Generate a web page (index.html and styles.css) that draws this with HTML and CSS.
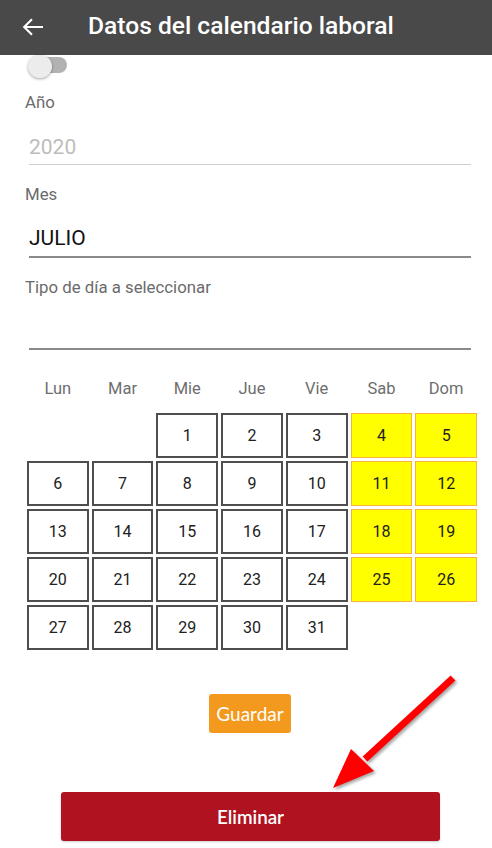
FILE: index.html
```html
<!DOCTYPE html>
<html lang="es">
<head>
<meta charset="utf-8">
<title>Datos del calendario laboral</title>
<link rel="stylesheet" href="styles.css">
</head>
<body>
<div class="page">
  <header class="topbar">
    <svg class="back" width="22" height="18" viewBox="0 0 22 18" aria-hidden="true">
      <path d="M21 9H2.5M10 1.2L2.2 9l7.8 7.8" fill="none" stroke="#fff" stroke-width="2.1"/>
    </svg>
    <h1 class="title">Datos del calendario laboral</h1>
  </header>

  <div class="toggle-row">
    <span class="toggle"><span class="track"></span><span class="thumb"></span></span>
  </div>

  <div class="label label-ano">Año</div>
  <div class="field field-disabled"><span class="value">2020</span></div>

  <div class="label label-mes">Mes</div>
  <div class="field field-dark"><span class="value value-dark">JULIO</span></div>

  <div class="label label-tipo">Tipo de día a seleccionar</div>
  <div class="field field-empty"></div>

  <div class="weekdays">
    <span>Lun</span><span>Mar</span><span>Mie</span><span>Jue</span><span>Vie</span><span>Sab</span><span>Dom</span>
  </div>

  <div class="calendar">
    <span class="blank"></span><span class="blank"></span>
    <span class="day">1</span><span class="day">2</span><span class="day">3</span><span class="day weekend">4</span><span class="day weekend">5</span>
    <span class="day">6</span><span class="day">7</span><span class="day">8</span><span class="day">9</span><span class="day">10</span><span class="day weekend">11</span><span class="day weekend">12</span>
    <span class="day">13</span><span class="day">14</span><span class="day">15</span><span class="day">16</span><span class="day">17</span><span class="day weekend">18</span><span class="day weekend">19</span>
    <span class="day">20</span><span class="day">21</span><span class="day">22</span><span class="day">23</span><span class="day">24</span><span class="day weekend">25</span><span class="day weekend">26</span>
    <span class="day">27</span><span class="day">28</span><span class="day">29</span><span class="day">30</span><span class="day">31</span>
  </div>

  <div class="save-row"><button class="btn-save">Guardar</button></div>
  <div class="delete-row"><button class="btn-delete">Eliminar</button></div>

  <svg class="pointer" width="150" height="130" viewBox="0 0 150 130" aria-hidden="true">
    <g class="pointer-shape">
      <line x1="128" y1="8" x2="40" y2="89" stroke="#ff0000" stroke-width="7"/>
      <polygon points="8,118 26,79 49,101" fill="#ff0000"/>
    </g>
  </svg>
</div>
</body>
</html>
```

FILE: styles.css
```css
* { box-sizing: border-box; }
html, body { margin: 0; padding: 0; background: #fff; }
body { font-family: Roboto, "Noto Sans", Arial, sans-serif; color: #212121; }

.page { position: relative; width: 492px; height: 848px; overflow: hidden; }

.topbar {
  height: 55px;
  background: #494949;
  display: flex;
  align-items: center;
  padding-left: 22px;
}
.back { display: block; margin-top: -2px; }
.title {
  margin: -4px 0 0 44px;
  font-size: 24.6px;
  font-weight: 500;
  color: #fff;
  letter-spacing: 0;
}

.toggle-row { height: 26px; padding-left: 28px; }
.toggle { position: relative; display: block; width: 40px; height: 25px; }
.track {
  position: absolute; left: 12px; top: 2px;
  width: 27px; height: 16px; border-radius: 8px;
  background: #b2b2b2;
}
.thumb {
  position: absolute; left: 0; top: 0;
  width: 24px; height: 23px; border-radius: 50%;
  background: #ececec;
  box-shadow: 0 1px 3px rgba(0,0,0,0.35);
}

.label {
  padding-left: 25px;
  font-size: 16.8px;
  line-height: 20px;
  color: #6b6b6b;
}
.label-ano { margin-top: 11px; }
.label-mes { margin-top: 19px; }
.label-tipo { margin-top: 19px; }

.field {
  margin-left: 29px;
  width: 442px;
  display: flex;
  align-items: flex-end;
}
.field-disabled { height: 53px; border-bottom: 1px solid #cfcfcf; padding-bottom: 4px; }
.field-dark { height: 54px; border-bottom: 2px solid #8a8a8a; padding-bottom: 5px; }
.field-empty { height: 53px; border-bottom: 2px solid #8a8a8a; }

.value { font-size: 21px; line-height: 26px; color: #bdbdbd; }
.value-dark { color: #111; }

.weekdays {
  margin: 29px 0 0 27px;
  width: 450px;
  display: grid;
  grid-template-columns: repeat(7, 1fr);
  column-gap: 3px;
  font-size: 16.5px;
  line-height: 20px;
  color: #6e6e6e;
  text-align: center;
}

.calendar {
  margin: 14px 0 0 27px;
  width: 450px;
  display: grid;
  grid-template-columns: repeat(7, 1fr);
  grid-auto-rows: 45px;
  gap: 3px;
}
.day {
  display: flex;
  align-items: center;
  justify-content: center;
  border: 2px solid #4e4e4e;
  font-size: 16px;
  color: #212121;
  background: #fff;
}
.day.weekend {
  background: #ffff00;
  border: 1px solid #f7b23b;
}

.save-row { display: flex; justify-content: center; margin-top: 44px; padding-left: 8px; }
.btn-save {
  width: 82px; height: 39px;
  border: none; border-radius: 3px;
  background: #f39a1e;
  color: #fff;
  font-family: Lato, "Open Sans", sans-serif;
  font-size: 19px;
  padding: 0;
}

.delete-row { display: flex; margin-top: 59px; padding-left: 61px; }
.btn-delete {
  width: 379px; height: 49px;
  border: none; border-radius: 3px;
  background: #b01220;
  color: #fff;
  font-family: Lato, "Open Sans", sans-serif;
  font-weight: 600;
  font-size: 18.8px;
  padding: 0;
  box-shadow: 0 1px 2px rgba(0,0,0,0.2);
}

.pointer { position: absolute; left: 325px; top: 670px; pointer-events: none; }
.pointer-shape { filter: drop-shadow(2px 2px 1.5px rgba(0,0,0,0.35)); }
```
